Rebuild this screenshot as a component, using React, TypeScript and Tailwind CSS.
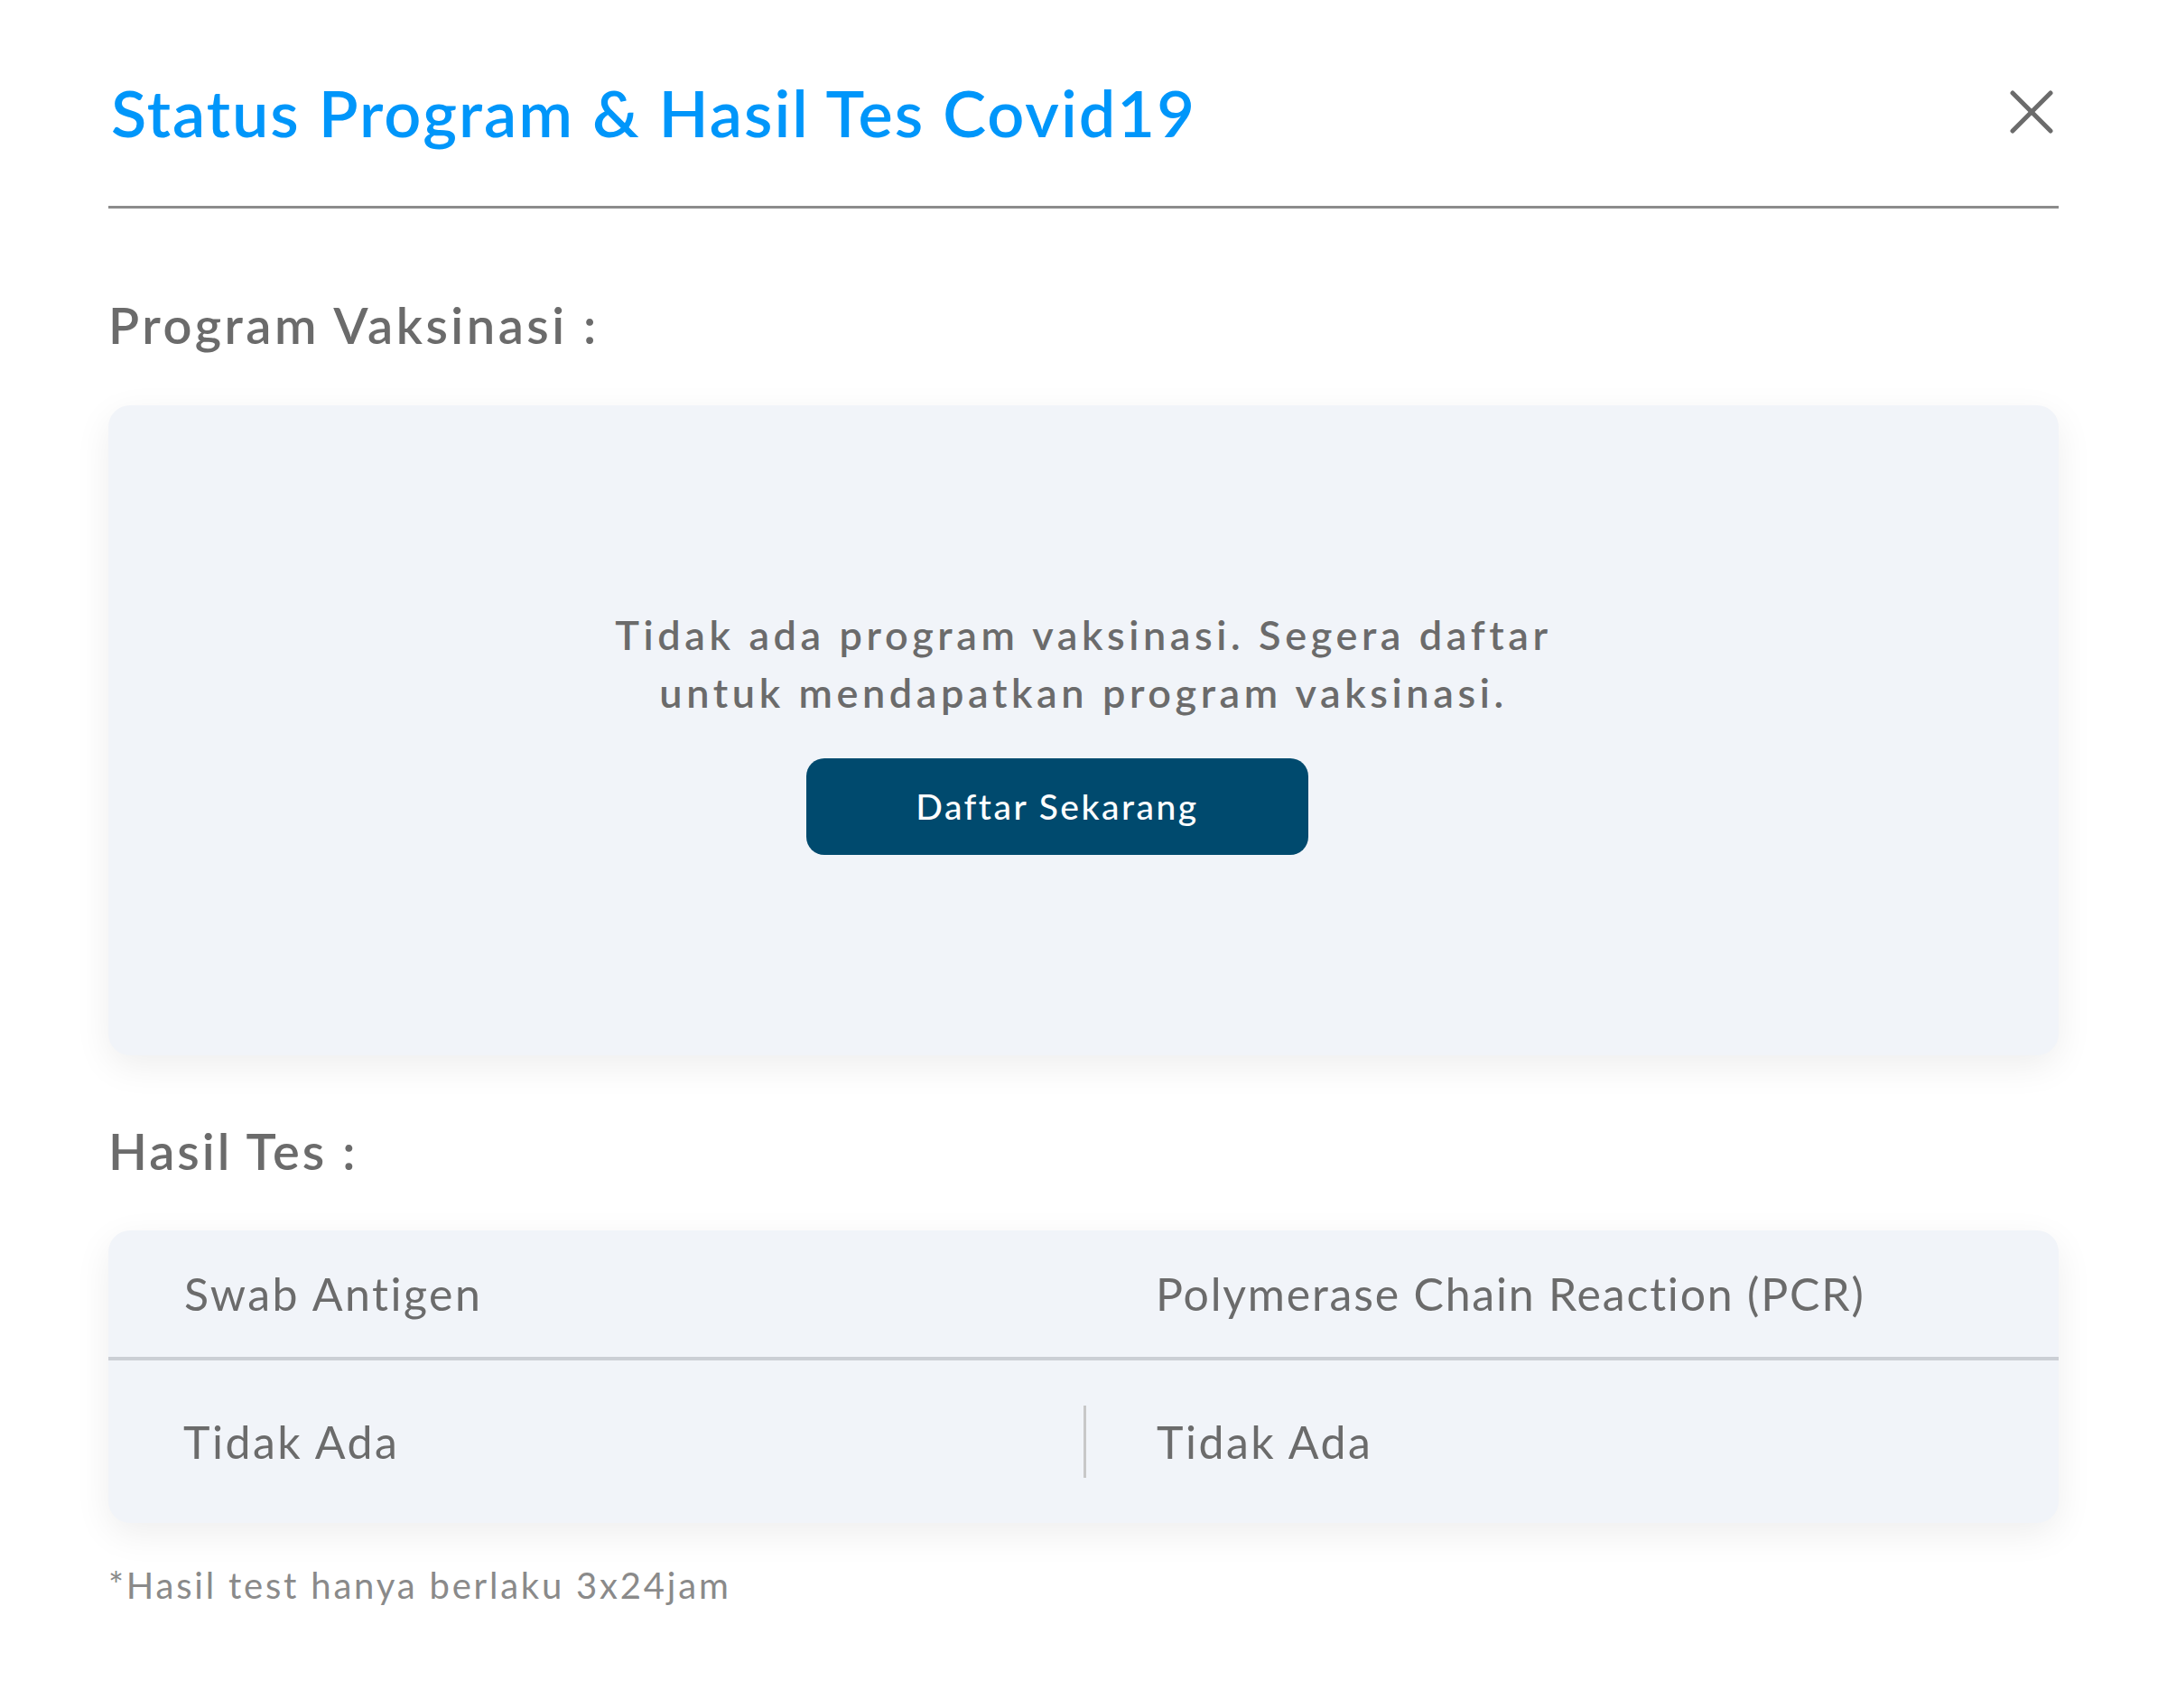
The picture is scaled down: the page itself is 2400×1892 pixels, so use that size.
import React from "react";

export default function App() {
  return (
    <div
      className="w-full min-h-[1892px] bg-white px-[120px] text-[#6b6b6b]"
      style={{ fontFamily: "Lato, 'Noto Sans', sans-serif" }}
    >
      {/* Header */}
      <div className="flex h-[228px] items-center justify-between pt-[20px]">
        <h1 className="ml-[3px] text-[72px] leading-none font-semibold tracking-[2px] text-[#0096fa]">
          Status Program &amp; Hasil Tes Covid19
        </h1>
        <button className="mr-[6px] flex h-[48px] w-[48px] items-center justify-center">
          <svg width="48" height="48" viewBox="0 0 48 48" fill="none">
            <line x1="3" y1="3" x2="45" y2="45" stroke="#6b6b6b" strokeWidth="5" strokeLinecap="round" />
            <line x1="45" y1="3" x2="3" y2="45" stroke="#6b6b6b" strokeWidth="5" strokeLinecap="round" />
          </svg>
        </button>
      </div>
      <div className="h-[3px] bg-[#8c8c8c]" />

      {/* Program Vaksinasi */}
      <h2 className="mt-[101px] text-[56px] leading-none font-semibold tracking-[3.5px]">
        Program Vaksinasi :
      </h2>
      <div className="mt-[61px] flex h-[720px] flex-col items-center justify-center rounded-[24px] bg-[#f1f4f9] shadow-[0_12px_40px_rgba(0,0,0,0.07)]">
        <p className="text-center text-[45px] leading-[64px] font-semibold tracking-[4.6px]">
          Tidak ada program vaksinasi. Segera daftar
          <br />
          untuk mendapatkan program vaksinasi.
        </p>
        <button className="mt-[41px] mr-[58px] flex h-[107px] w-[556px] items-center justify-center rounded-[20px] bg-[#004a6e] text-[39px] font-medium tracking-[2.5px] text-white">
          Daftar Sekarang
        </button>
      </div>

      {/* Hasil Tes */}
      <h2 className="mt-[78px] text-[56px] leading-none font-semibold tracking-[3px]">
        Hasil Tes :
      </h2>
      <div className="mt-[60px] overflow-hidden rounded-[24px] bg-[#f1f4f9] shadow-[0_12px_40px_rgba(0,0,0,0.07)]">
        <div className="grid h-[140px] grid-cols-2 items-center text-[50px] tracking-[2.5px]">
          <div className="pl-[84px]">Swab Antigen</div>
          <div className="pl-[80px] tracking-[1.8px]">Polymerase Chain Reaction (PCR)</div>
        </div>
        <div className="h-[4px] bg-[#cbcfd5]" />
        <div className="grid h-[180px] grid-cols-2 items-center text-[50px] tracking-[2.5px]">
          <div className="pl-[83px]">Tidak Ada</div>
          <div className="flex items-center">
            <div className="h-[80px] w-[3px] bg-[#c8c8c8]" />
            <div className="ml-[78px]">Tidak Ada</div>
          </div>
        </div>
      </div>

      <p className="mt-[49px] text-[40px] leading-none tracking-[2.8px] text-[#8a8a8a]">
        *Hasil test hanya berlaku 3x24jam
      </p>
    </div>
  );
}
